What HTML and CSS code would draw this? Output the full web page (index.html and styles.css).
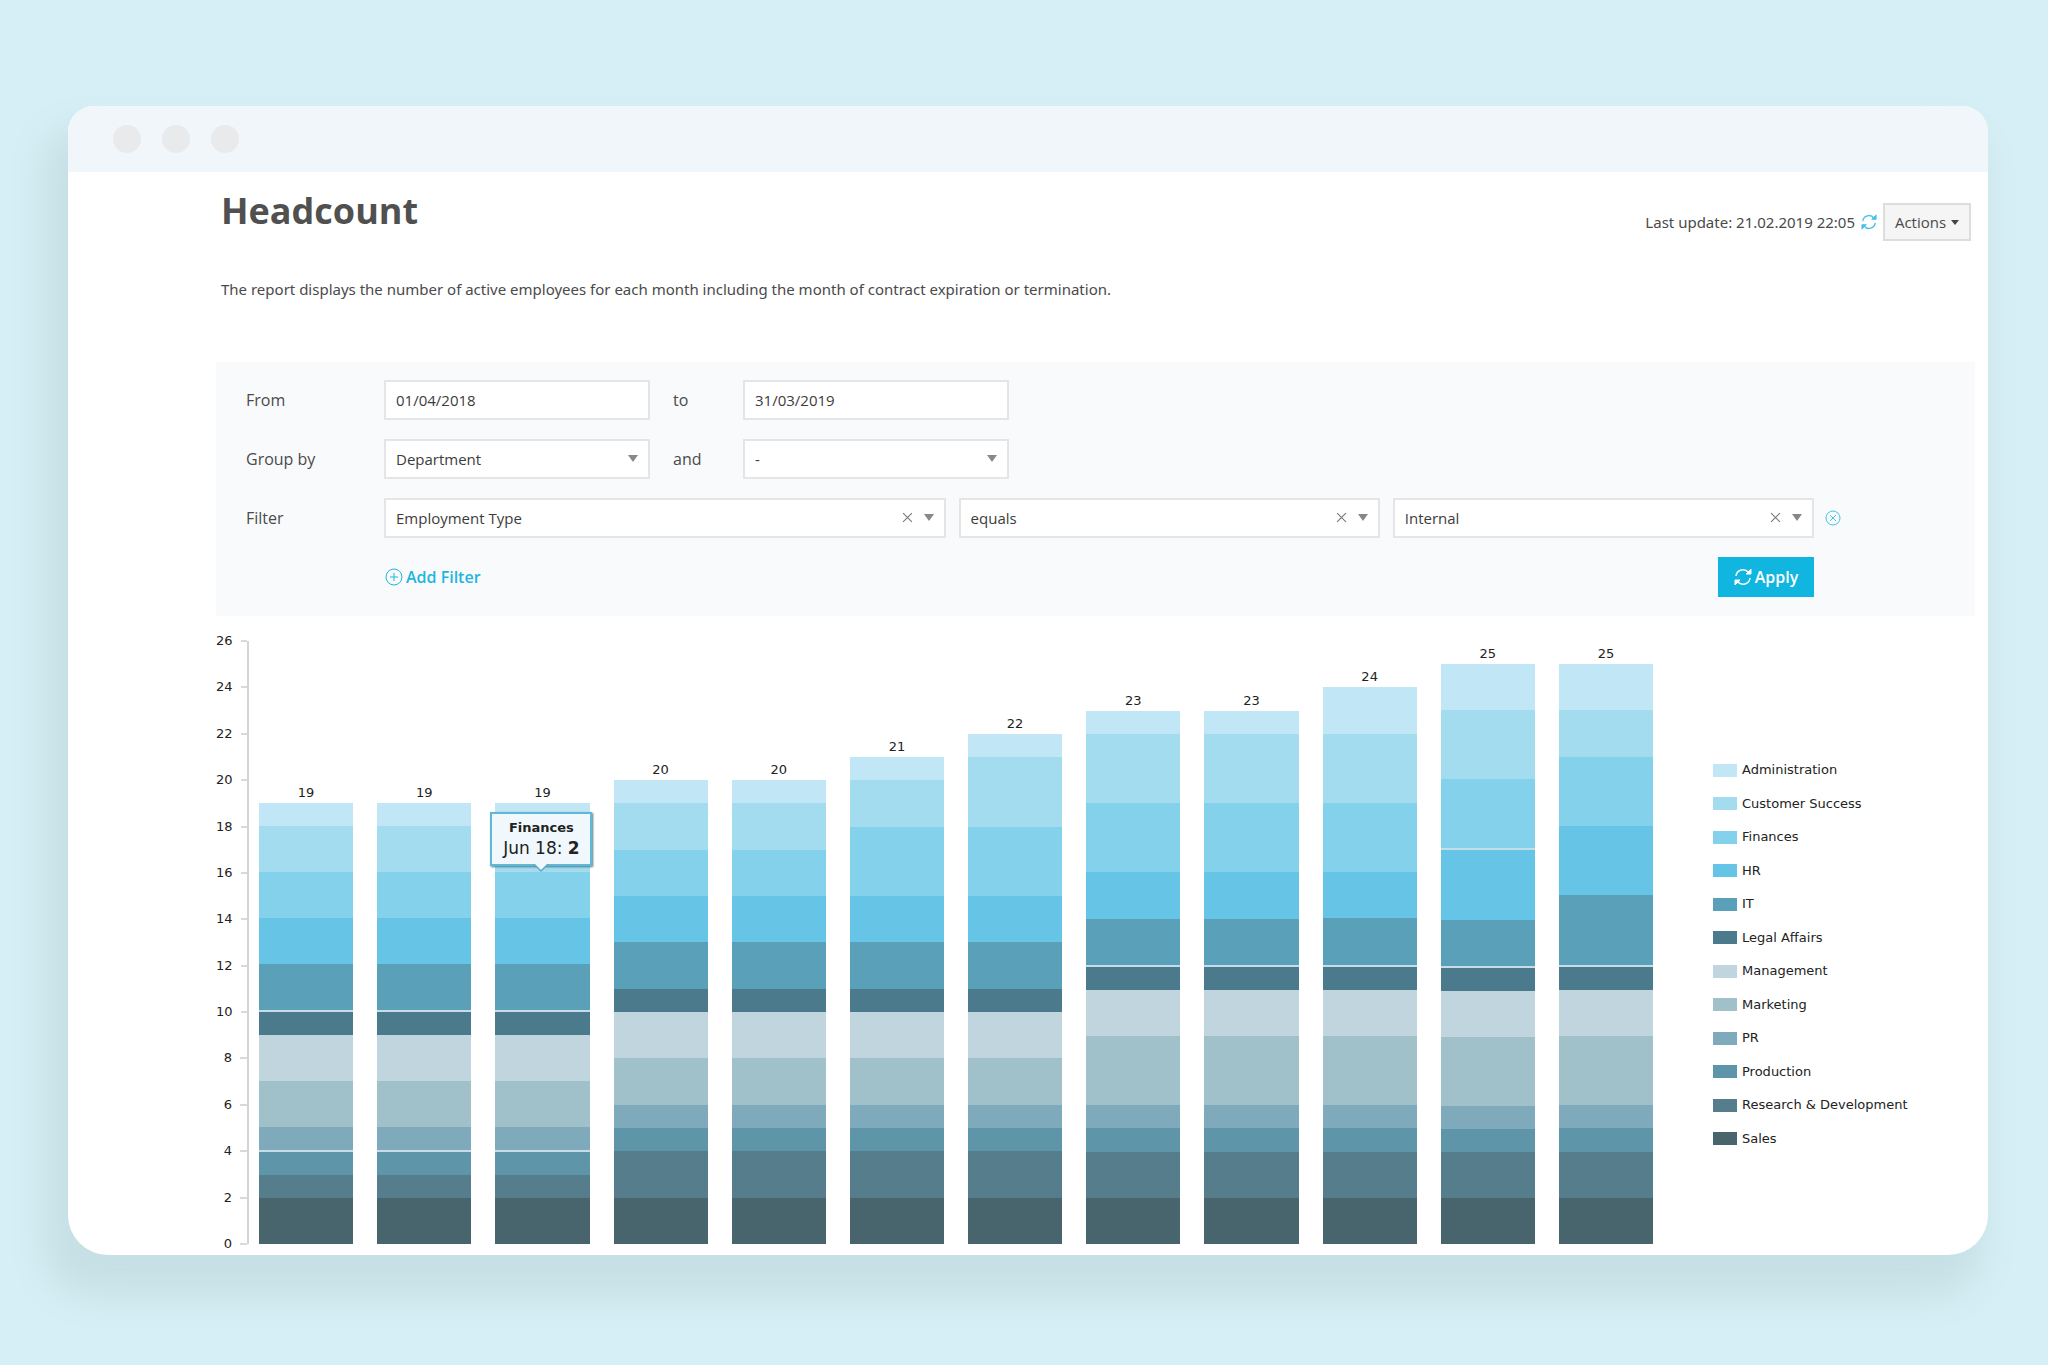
FILE: index.html
```html
<!DOCTYPE html>
<html lang="en">
<head>
<meta charset="utf-8">
<meta name="viewport" content="width=device-width, initial-scale=1">
<title>Headcount</title>
<link rel="stylesheet" href="styles.css">
</head>
<body>
<svg class="sprite" aria-hidden="true">
  <symbol id="refresh" viewBox="0 0 18 18">
    <path d="M2 8a7 7 0 0 1 12.500-3.500M16 10a7 7 0 0 1-12.500 3.500" fill="none" stroke="currentColor" stroke-width="1.500"/>
    <path d="M17 1v5h-5zM1 17v-5h5z" fill="currentColor"/>
  </symbol>
</svg>
<main class="window">
  <div class="titlebar"><span class="dot"></span><span class="dot"></span><span class="dot"></span></div>
  <div class="content">
    <header class="head">
      <h1>Headcount</h1>
      <div class="status">
        <span>Last update: 21.02.2019 22:05</span>
        <button class="icon-btn" type="button" aria-label="Refresh"><svg class="icon small"><use href="#refresh"/></svg></button>
        <button class="actions" type="button">Actions<span class="caret"></span></button>
      </div>
    </header>
    <p class="lead">The report displays the number of active employees for each month including the month of contract expiration or termination.</p>

    <form class="panel">
      <div class="row">
        <label class="label" for="from">From</label>
        <input class="field short" id="from" type="text" value="01/04/2018">
        <label class="mid" for="to">to</label>
        <input class="field short" id="to" type="text" value="31/03/2019">
      </div>
      <div class="row">
        <label class="label" for="group">Group by</label>
        <div class="select short"><select class="field" id="group"><option>Department</option></select></div>
        <label class="mid" for="group2">and</label>
        <div class="select short"><select class="field" id="group2"><option>-</option></select></div>
      </div>
      <div class="row">
        <label class="label" for="filter">Filter</label>
        <div class="filters">
          <div class="select"><select class="field" id="filter"><option>Employment Type</option></select><button class="clear" type="button" aria-label="Clear type"><svg viewBox="0 0 10 10"><path d="M1 1l8 8M9 1l-8 8"/></svg></button></div>
          <div class="select"><select class="field" aria-label="Operator"><option>equals</option></select><button class="clear" type="button" aria-label="Clear operator"><svg viewBox="0 0 10 10"><path d="M1 1l8 8M9 1l-8 8"/></svg></button></div>
          <div class="select"><select class="field" aria-label="Value"><option>Internal</option></select><button class="clear" type="button" aria-label="Clear value"><svg viewBox="0 0 10 10"><path d="M1 1l8 8M9 1l-8 8"/></svg></button></div>
        </div>
        <button class="icon-btn remove" type="button" aria-label="Remove filter"><svg class="icon" viewBox="0 0 18 18"><circle cx="9" cy="9" r="7"/><path d="M6 6l6 6M12 6l-6 6"/></svg></button>
      </div>
      <div class="row buttons">
        <button class="add" type="button"><svg class="icon" viewBox="0 0 18 18"><circle cx="9" cy="9" r="8"/><path d="M9 5v8M5 9h8"/></svg>Add Filter</button>
        <button class="apply" type="button"><svg class="icon"><use href="#refresh"/></svg>Apply</button>
      </div>
    </form>

    <section class="chart" aria-label="Headcount by department">
      <ol class="axis" id="axis"></ol>
      <div class="plot" id="plot"></div>
      <ul class="legend" id="legend"></ul>
    </section>
  </div>
</main>
<script src="chart.js"></script>
</body>
</html>
```

FILE: styles.css
```css
* { box-sizing: border-box; }

body {
  margin: 0;
  min-height: 100vh;
  padding: 106px 60px 108px 68px;
  background: #d6eff6;
  color: #4a4a4a;
  font: 500 16px/24px "Open Sans", "Noto Sans", sans-serif;
}

h1, p, ol, ul { margin: 0; padding: 0; }
ol, ul { list-style: none; }

button, input, select { font: inherit; color: inherit; }
button { padding: 0; border: 0; background: none; cursor: pointer; }

.sprite { position: absolute; width: 0; height: 0; }

.icon {
  width: 18px;
  height: 18px;
  flex: none;
  fill: none;
  stroke: currentColor;
  stroke-width: 1;
}

.icon.small { width: 16px; height: 16px; }

.window {
  background: #fff;
  border-radius: 26px 26px 40px 40px;
  box-shadow: -15px 32px 36px 10px #c6e0e5;
}

.titlebar {
  display: flex;
  align-items: center;
  gap: 21px;
  height: 66px;
  padding-left: 45px;
  border-radius: 26px 26px 0 0;
  background: #f0f6f9;
}

.dot { width: 28px; height: 28px; border-radius: 50%; background: #e8eaec; }

.content { padding: 14px 13px 3px 148px; }

.head {
  display: flex;
  align-items: flex-start;
  justify-content: space-between;
  padding: 0 4px 0 5px;
}

h1 { font-size: 36px; line-height: 50px; font-weight: 700; color: #505050; }

.status { display: flex; align-items: center; gap: 6px; margin-top: 17px; font: 15px/24px "Noto Sans", "Open Sans", sans-serif; }
.icon-btn { display: flex; color: #45c3e6; }

.actions {
  display: flex;
  align-items: center;
  justify-content: center;
  gap: 5px;
  width: 88px;
  height: 38px;
  border: 2px solid #ddd;
  background: #f5f5f5;
  font: 500 15px/24px "Open Sans", "Noto Sans", sans-serif;
}

.caret { border: 4px solid transparent; border-top: 5px solid #444; border-bottom: 0; }

.lead { margin: 36px 5px 0; font: 15px/24px "Noto Sans", "Open Sans", sans-serif; }

.panel {
  display: grid;
  gap: 19px;
  margin-top: 61px;
  padding: 18px 0 19px 30px;
  background: #f9fafc;
}

.row { display: flex; align-items: center; height: 40px; }
.label { width: 138px; flex: none; }
.mid { width: 93px; padding-left: 23px; flex: none; }

.field {
  display: block;
  width: 100%;
  height: 40px;
  padding: 0 10px;
  border: 2px solid #e4e5e7;
  border-radius: 0;
  background: #fff;
  color: #3c3c3c;
  font-size: 15px;
  appearance: none;
}

.short { width: 266px; }
.select { position: relative; }

.select::after {
  content: "";
  position: absolute;
  top: 16px;
  right: 12px;
  border: 5px solid transparent;
  border-top: 7px solid #888;
  border-bottom: 0;
  pointer-events: none;
}

.clear { position: absolute; top: 14px; right: 33px; width: 11px; height: 11px; display: flex; }
.clear svg { width: 11px; height: 11px; stroke: #777; stroke-width: 1; fill: none; }

.filters { display: grid; grid-template-columns: 4fr 3fr 3fr; gap: 13px; flex: 1; }
.remove { width: 161px; padding-left: 10px; }

.buttons { justify-content: space-between; padding: 0 161px 0 139px; }
.add, .apply { display: flex; align-items: center; gap: 3px; font-weight: 600; }
.add { color: #1fb6dc; }
.apply { justify-content: center; width: 96px; height: 40px; background: #10b6e0; color: #fff; }

.chart {
  display: flex;
  padding-top: 17px;
  color: #222;
  font: 13px/16px "DejaVu Sans", Verdana, sans-serif;
}

.axis {
  display: flex;
  flex-direction: column;
  justify-content: space-between;
  width: 31px;
  height: 619px;
}

.axis li { display: flex; align-items: center; justify-content: flex-end; gap: 8px; }
.axis li::after { content: ""; width: 7px; height: 2px; background: #d9d9d9; }

.plot {
  display: flex;
  flex: 1;
  gap: 24px;
  height: 603px;
  margin: 8px 60px 0 0;
  padding-left: 10px;
  border-left: 2px solid #d4d4d4;
}

.month { display: flex; flex: 1; flex-direction: column; justify-content: flex-end; text-align: center; }
.stack { display: flex; flex: none; flex-direction: column-reverse; margin-top: 2px; }
.segment { position: relative; flex-basis: 0; }
.seam { border-bottom: 2px solid #c4dde6; }

.administration { background: #c1e7f6; }
.customer-success { background: #a3dcee; }
.finances { background: #84d1eb; }
.hr { background: #66c4e7; }
.it { background: #5aa0b9; }
.legal-affairs { background: #4b7a8c; }
.management { background: #c0d5de; }
.marketing { background: #a0c0ca; }
.pr { background: #7faabb; }
.production { background: #5f95a9; }
.research-development { background: #557d8b; }
.sales { background: #48646c; }

.legend {
  display: flex;
  flex-direction: column;
  justify-content: space-between;
  width: 262px;
  height: 385px;
  margin-top: 129px;
}

.legend li { display: flex; align-items: center; gap: 5px; }
.swatch { width: 24px; height: 13px; }

.tooltip {
  position: absolute;
  z-index: 1;
  left: 50%;
  bottom: calc(100% + 6px);
  width: 102px;
  margin-left: -52px;
  padding: 4px 0 6px;
  border: 2px solid #5fb9d6;
  background: #f0f8fd;
  box-shadow: 1px 1px 2px #4b7a8c;
  line-height: 20px;
  color: #222;
  white-space: nowrap;
}

.tooltip b { display: block; font-size: 13px; }
.tooltip span { display: block; font-size: 17px; }
.tooltip span b { display: inline; font-size: 17px; }

.tooltip::before, .tooltip::after {
  content: "";
  position: absolute;
  left: 50%;
  top: 100%;
  margin-left: -8px;
  border: 8px solid transparent;
  border-bottom: 0;
  border-top-color: #5fa9c3;
}

.tooltip::after { margin: -1px 0 0 -7px; border-width: 7px 7px 0; border-top-color: #f0f8fd; }
```

FILE: chart.js
```js
const departments = ["Sales", "Research & Development", "Production", "PR", "Marketing", "Management",
  "Legal Affairs", "IT", "HR", "Finances", "Customer Success", "Administration"];

// One row per month, April 2018 to March 2019, in the order of the departments.
const months = [
  [2, 1, 1, 1, 2, 2, 1, 2, 2, 2, 2, 1],
  [2, 1, 1, 1, 2, 2, 1, 2, 2, 2, 2, 1],
  [2, 1, 1, 1, 2, 2, 1, 2, 2, 2, 2, 1],
  [2, 2, 1, 1, 2, 2, 1, 2, 2, 2, 2, 1],
  [2, 2, 1, 1, 2, 2, 1, 2, 2, 2, 2, 1],
  [2, 2, 1, 1, 2, 2, 1, 2, 2, 3, 2, 1],
  [2, 2, 1, 1, 2, 2, 1, 2, 2, 3, 3, 1],
  [2, 2, 1, 1, 3, 2, 1, 2, 2, 3, 3, 1],
  [2, 2, 1, 1, 3, 2, 1, 2, 2, 3, 3, 1],
  [2, 2, 1, 1, 3, 2, 1, 2, 2, 3, 3, 2],
  [2, 2, 1, 1, 3, 2, 1, 2, 3, 3, 3, 2],
  [2, 2, 1, 1, 3, 2, 1, 3, 3, 3, 2, 2]
];

// Light dividers under a segment, by month index.
const seams = { 0: [3, 7], 1: [3, 7], 2: [3, 7], 7: [7], 8: [7], 9: [7], 10: [7, 9], 11: [7] };
const max = 26;
const slug = name => name.toLowerCase().replace(/[^a-z]+/g, "-");

function add(parent, tag, className, text) {
  const node = document.createElement(tag);
  if (className) node.className = className;
  if (text !== undefined) node.textContent = text;
  return parent.appendChild(node);
}

const axis = document.getElementById("axis");
for (let value = max; value >= 0; value -= 2) add(axis, "li", "", value);

const plot = document.getElementById("plot");
months.forEach((counts, month) => {
  const total = counts.reduce((a, b) => a + b, 0);
  const column = add(plot, "div", "month");
  add(column, "span", "total", total);
  const stack = add(column, "div", "stack");
  stack.style.height = total / max * 100 + "%";
  counts.forEach((count, i) => {
    const seam = (seams[month] || []).includes(i) ? " seam" : "";
    const segment = add(stack, "div", "segment " + slug(departments[i]) + seam);
    segment.style.flexGrow = count;
    if (month === 2 && departments[i] === "Finances") {
      const tip = add(segment, "div", "tooltip");
      add(tip, "b", "", "Finances");
      const line = add(tip, "span", "", "Jun 18: ");
      add(line, "b", "", count);
    }
  });
});

const legend = document.getElementById("legend");
[...departments].reverse().forEach(name => {
  const item = add(legend, "li");
  add(item, "span", "swatch " + slug(name));
  add(item, "span", "", name);
});
```
